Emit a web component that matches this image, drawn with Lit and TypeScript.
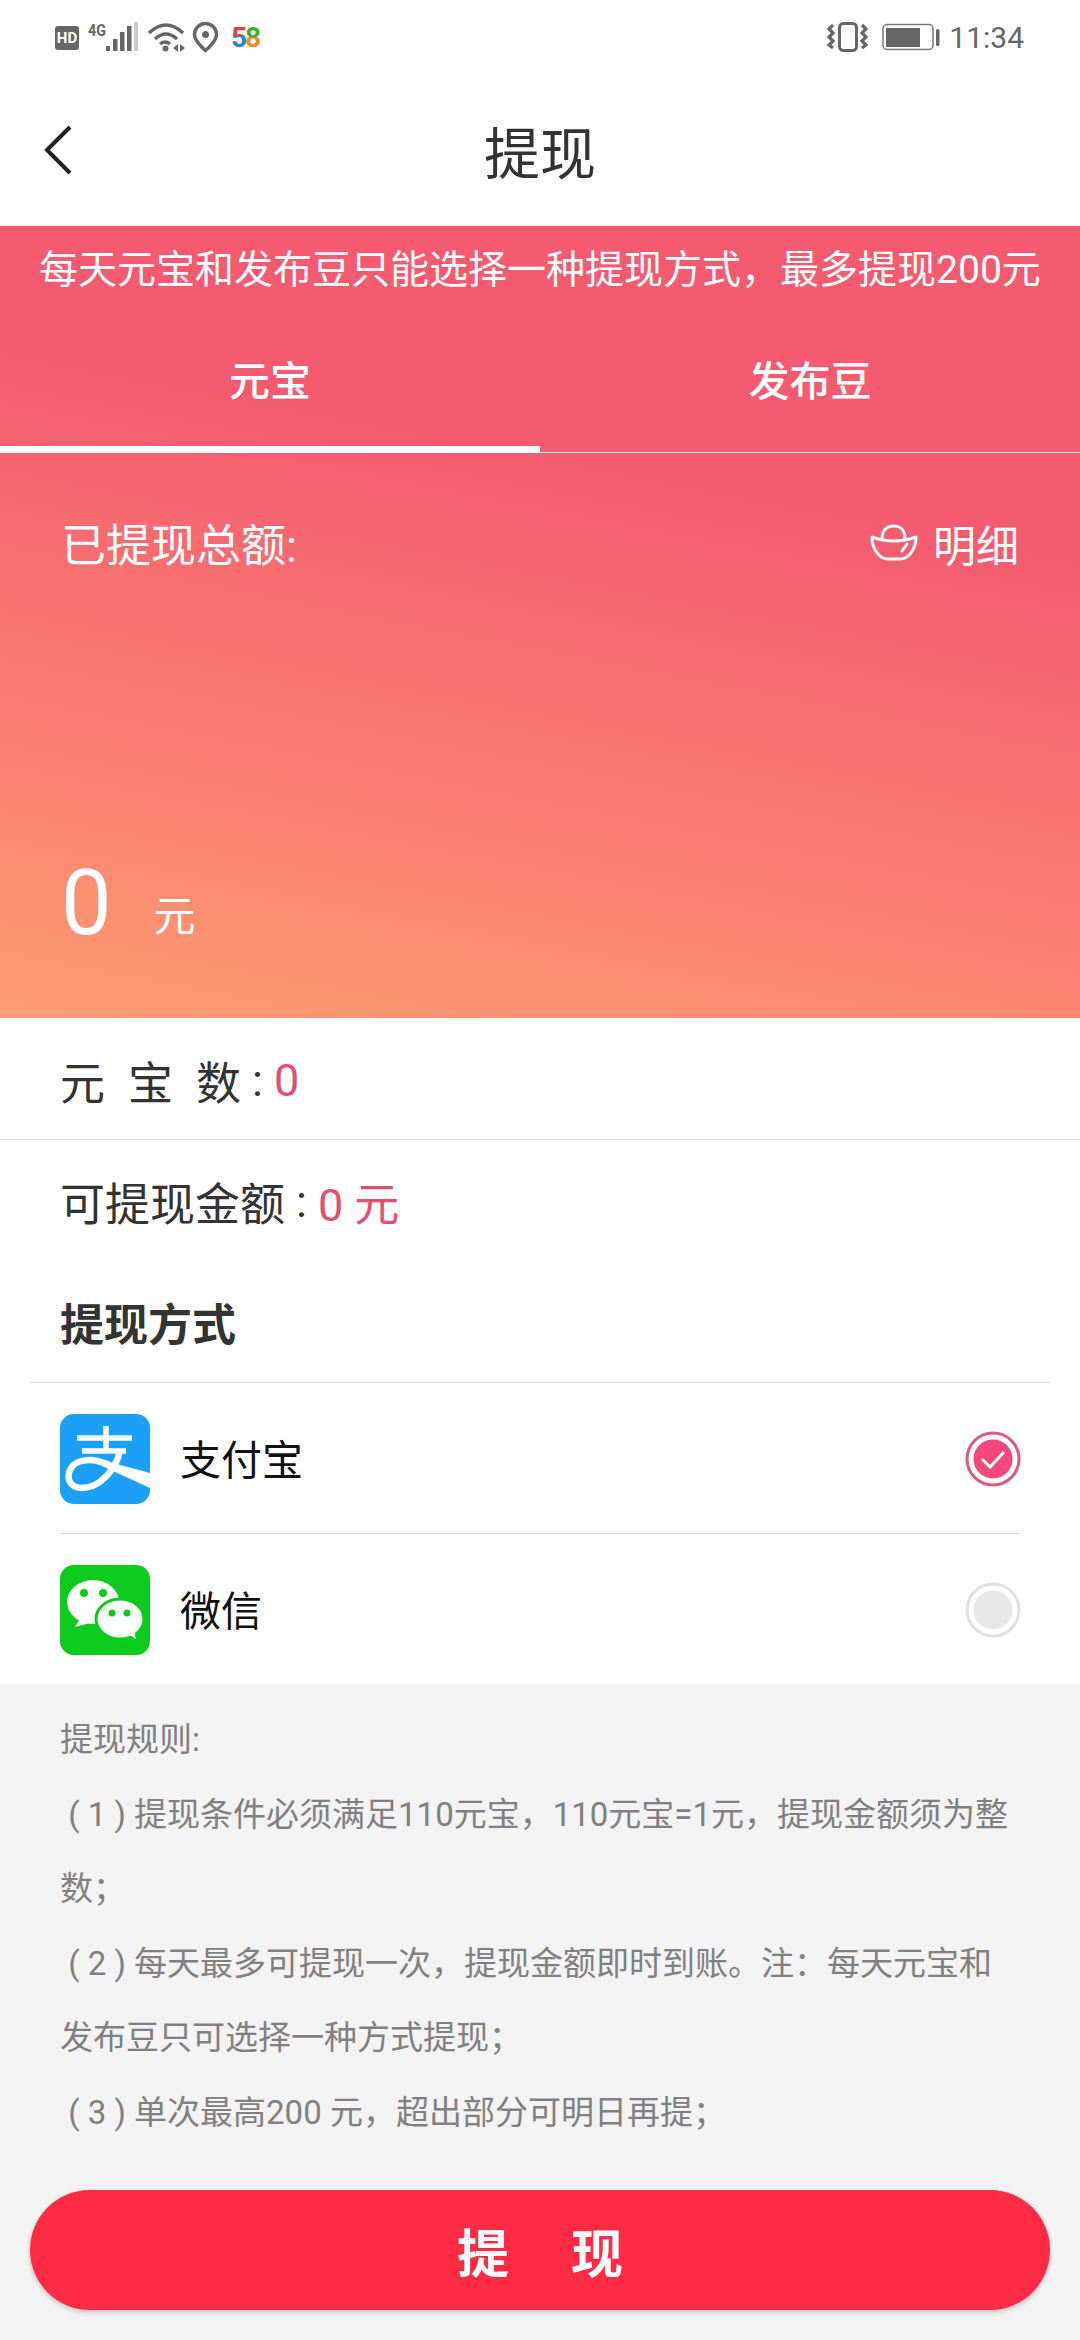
import { LitElement, html, css } from "lit";
import { customElement } from "lit/decorators.js";

@customElement("app-root")
export class AppRoot extends LitElement {
  static styles = css`
    :host { display: block; width: 1080px; height: 2340px; background: #fff; font-family: Roboto, "Noto Sans CJK SC", sans-serif; overflow: hidden; }
    * { box-sizing: border-box; }
    svg { display: block; flex: none; }
    .status { height: 75px; display: flex; align-items: center; justify-content: space-between; padding: 0 56px 0 55px; }
    .status-right { display: flex; align-items: center; }
    .time { font-size: 30px; color: #666; margin-left: 8px; }
    .header { height: 151px; display: grid; grid-template-columns: 1fr auto 1fr; align-items: center; }
    .back { margin: 0 0 2px 43px; }
    .header h1 { margin: 0; padding-top: 8px; font-weight: 400; font-size: 56px; color: #333; line-height: 1; }
    .hero { height: 792px; background: linear-gradient(191deg, #f45a70 0%, #f45b70 33%, #fe9c72 100%); color: #fff; display: flex; flex-direction: column; }
    .notice { height: 84px; display: flex; align-items: center; justify-content: center; font-size: 39px; white-space: nowrap; padding-bottom: 4px; }
    .tabs { height: 143px; display: flex; border-bottom: 1px solid rgba(255,255,255,.8); }
    .tab { flex: 1; display: flex; align-items: center; justify-content: center; font-size: 41px; font-weight: 500; position: relative; padding-bottom: 6px; }
    .tab.on::after { content: ""; position: absolute; left: 0; right: 0; bottom: -1px; height: 7px; background: #fff; }
    .hero-top { display: flex; justify-content: space-between; align-items: center; padding: 57px 61px 0; font-size: 45px; }
    .detail { display: flex; align-items: center; gap: 15px; font-size: 43px; }
    .amount { margin-top: auto; padding: 0 61px 69px; display: flex; align-items: flex-end; gap: 42px; }
    .amount b { font-weight: 400; font-size: 90px; line-height: 1; }
    .amount span { font-size: 42px; line-height: 1; margin-bottom: 11px; }
    .row { height: 122px; display: flex; align-items: center; padding: 0 60px; font-size: 45px; color: #333; white-space: pre; }
    .row.line { border-bottom: 1px solid #ddd; padding-top: 3px; }
    .spaced { display: flex; gap: 23px; }
    .colon { margin: 0 11px 0 11px; }
    .red { color: #e54e6e; }
    .method-title { height: 121px; margin: 0 30px; display: flex; align-items: center; padding: 0 30px; font-size: 44px; font-weight: 700; color: #333; border-bottom: 1px solid #ddd; }
    .pay { margin: 0 60px; height: 150px; padding-top: 2px; display: flex; align-items: center; font-size: 41px; color: #111; gap: 30px; }
    .pay + .pay { border-top: 1px solid #d8d8d8; height: 151px; }
    .pay > span { margin-bottom: 5px; }
    .pay .radio { margin-left: auto; margin-right: -1px; }
    .bottom { background: #f3f3f3; height: 656px; padding: 19px 30px 30px; display: flex; flex-direction: column; }
    .rules { padding: 0 30px; color: #808080; font-size: 33px; line-height: 74.5px; white-space: nowrap; }
    .rules p { margin: 0; }
    .btn { margin-top: auto; height: 120px; border-radius: 60px; background: #ff2a43; color: #fff; font-size: 52px; font-weight: 700; display: flex; align-items: center; justify-content: center; gap: 62px; box-shadow: 0 2px 5px rgba(0,0,0,.22); }
  `;

  render() {
    return html`
      <div class="status">
        <svg width="205" height="75" viewBox="55 0 205 75" fill="#666">
          <defs>
            <linearGradient id="five" x1="0" y1="0" x2="0" y2="1">
              <stop offset="0.45" stop-color="#e23c3c"/><stop offset="0.45" stop-color="#1c86d8"/>
            </linearGradient>
            <linearGradient id="eight" x1="0" y1="0" x2="0" y2="1">
              <stop offset="0.5" stop-color="#3cae2d"/><stop offset="0.5" stop-color="#f08a1e"/>
            </linearGradient>
          </defs>
          <rect x="55" y="26" width="24" height="24" rx="3"/>
          <text x="67" y="43" font-size="15" font-weight="700" fill="#fff" text-anchor="middle" font-family="Roboto">HD</text>
          <text x="88" y="36" font-size="17" font-weight="700" font-family="Roboto" textLength="18" lengthAdjust="spacingAndGlyphs">4G</text>
          <rect x="106" y="46" width="4" height="5"/><rect x="113" y="39" width="4.5" height="12"/><rect x="120" y="32" width="4.5" height="19"/><rect x="127" y="26" width="4.5" height="25"/>
          <rect x="134" y="22" width="4" height="29" fill="#ccc"/>
          <g fill="none" stroke="#666" stroke-width="3.5">
            <path d="M149 33Q166 17 183 33"/><path d="M155 39Q166 29 177 39"/><path d="M160 44Q165 40 170 44"/>
          </g>
          <circle cx="165.5" cy="48.5" r="3"/>
          <path d="M173 48l5-4v8zM180 44l5 4-5 4z"/>
          <path d="M205.500 23.500a11 11 0 0 1 11 11c0 7-11 16-11 16s-11-9-11-16a11 11 0 0 1 11-11z" fill="none" stroke="#666" stroke-width="3.500"/>
          <circle cx="205.500" cy="34.500" r="3.500"/>
          <text x="231" y="47" font-size="28" font-weight="700" font-family="Roboto" fill="url(#five)">5</text>
          <text x="245" y="47" font-size="28" font-weight="700" font-family="Roboto" fill="url(#eight)">8</text>
        </svg>
        <div class="status-right">
          <svg width="114" height="75" viewBox="826 0 114 75">
            <rect x="838.500" y="23.500" width="17" height="27" rx="4" fill="none" stroke="#666" stroke-width="3"/>
            <path d="M832 25l-4 4 4 4-4 4 4 4-4 4 4 3M861 25l4 4-4 4 4 4-4 4 4 4-4 3" fill="none" stroke="#666" stroke-width="3.200"/>
            <rect x="882" y="24.500" width="50" height="25" rx="4" fill="none" stroke="#777" stroke-width="1.500"/>
            <rect x="885" y="28" width="34" height="19" fill="#666"/>
            <rect x="935" y="29" width="3.500" height="17" rx="1.500" fill="#666"/>
          </svg>
          <span class="time">11:34</span>
        </div>
      </div>
      <div class="header">
        <svg class="back" width="30" height="52" viewBox="0 0 30 52"><path d="M27 3 4 26l23 23" fill="none" stroke="#222" stroke-width="4"/></svg>
        <h1>提现</h1>
      </div>
      <div class="hero">
        <div class="notice">每天元宝和发布豆只能选择一种提现方式，最多提现200元</div>
        <div class="tabs"><div class="tab on">元宝</div><div class="tab">发布豆</div></div>
        <div class="hero-top">
          <span>已提现总额:</span>
          <span class="detail">
            <svg width="48" height="37" viewBox="0 0 48 37" fill="none" stroke="#fff" stroke-width="3" stroke-linejoin="round" stroke-linecap="round">
              <path d="M2 13Q24 21 46 13C46 26 38 35 30 35H18C10 35 2 26 2 13Z"/>
              <path d="M12 15C12 5 18 2 24 2C30 2 35 6 35 15"/>
              <path d="M37 20L32 27"/>
            </svg>
            明细
          </span>
        </div>
        <div class="amount"><b>0</b><span>元</span></div>
      </div>
      <div class="row line"><span class="spaced"><span>元</span><span>宝</span><span>数</span></span><span class="colon">:</span><span class="red">0</span></div>
      <div class="row"><span>可提现金额</span><span class="colon">:</span><span class="red">0 元</span></div>
      <div class="method-title">提现方式</div>
      <div class="pay">
        <svg width="90" height="90" viewBox="0 0 90 90">
          <defs><clipPath id="ali"><rect width="90" height="90" rx="14"/></clipPath></defs>
          <rect width="90" height="90" rx="14" fill="#1aa1f7"/>
          <g clip-path="url(#ali)">
            <g fill="none" stroke="#fff">
              <path stroke-width="5.500" d="M17 24H72M46 12V37M22 37H66"/>
              <path stroke-width="6.500" d="M60 37C56 55 40 74 22 74C12 74 7 67 9 59C11 50 20 46 30 46C36 46 42 48 50 51"/>
            </g>
            <path d="M42 46L90 59V74L42 52Z" fill="#fff"/>
          </g>
        </svg>
        <span>支付宝</span>
        <svg class="radio" width="56" height="56" viewBox="0 0 56 56">
          <circle cx="28" cy="28" r="26" fill="none" stroke="#d95c82" stroke-width="3"/>
          <circle cx="28" cy="28" r="19.500" fill="#f4477b"/>
          <path d="M17 28l8 8 14-15" fill="none" stroke="#fff" stroke-width="3"/>
        </svg>
      </div>
      <div class="pay">
        <svg width="90" height="90" viewBox="0 0 90 90">
          <rect width="90" height="90" rx="14" fill="#0dcb1d"/>
          <ellipse cx="33" cy="37" rx="26" ry="22" fill="#fff"/>
          <path d="M20 54L15 62L30 58Z" fill="#fff"/>
          <circle cx="24" cy="28" r="4" fill="#0dcb1d"/><circle cx="43" cy="28" r="4" fill="#0dcb1d"/>
          <ellipse cx="60" cy="54" rx="24" ry="20" fill="#fff" stroke="#0dcb1d" stroke-width="3"/>
          <path d="M68 69L76 74L73 62Z" fill="#fff"/>
          <circle cx="52" cy="48" r="3.500" fill="#0dcb1d"/><circle cx="67" cy="48" r="3.500" fill="#0dcb1d"/>
        </svg>
        <span>微信</span>
        <svg class="radio" width="56" height="56" viewBox="0 0 56 56">
          <circle cx="28" cy="28" r="26" fill="none" stroke="#e0e0e0" stroke-width="3"/>
          <circle cx="28" cy="28" r="19.500" fill="#e8e8e8"/>
        </svg>
      </div>
      <div class="bottom">
        <div class="rules">
          <p>提现规则:</p>
          <p>&nbsp;( 1 ) 提现条件必须满足110元宝，110元宝=1元，提现金额须为整<br>数；</p>
          <p>&nbsp;( 2 ) 每天最多可提现一次，提现金额即时到账。注：每天元宝和<br>发布豆只可选择一种方式提现；</p>
          <p>&nbsp;( 3 ) 单次最高200 元，超出部分可明日再提；</p>
        </div>
        <div class="btn"><span>提</span><span>现</span></div>
      </div>
    `;
  }
}
